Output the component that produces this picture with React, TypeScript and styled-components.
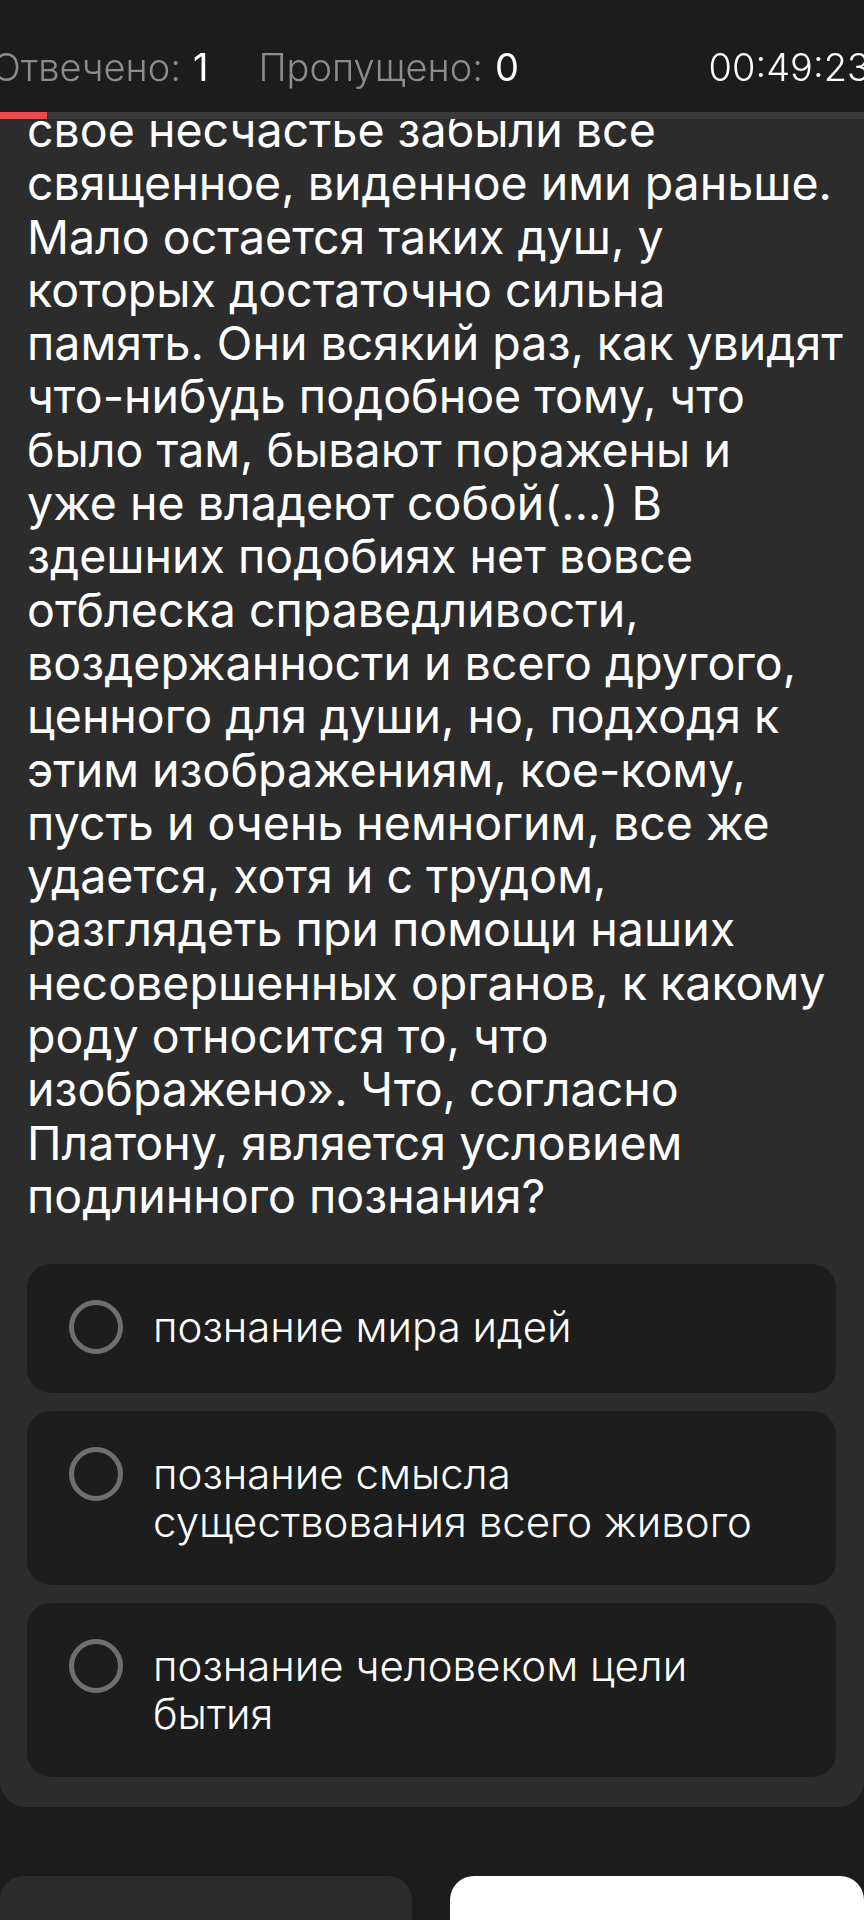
import React from 'react';
import styled, { createGlobalStyle } from 'styled-components';

const GlobalStyle = createGlobalStyle`
  html, body {
    margin: 0;
    padding: 0;
    background: #1c1c1c;
  }
  body {
    font-family: Inter, "Noto Sans", "DejaVu Sans", sans-serif;
    color: #ffffff;
  }
`;

const questionLines = [
  'свое несчастье забыли все',
  'священное, виденное ими раньше.',
  'Мало остается таких душ, у',
  'которых достаточно сильна',
  'память. Они всякий раз, как увидят',
  'что-нибудь подобное тому, что',
  'было там, бывают поражены и',
  'уже не владеют собой(…) В',
  'здешних подобиях нет вовсе',
  'отблеска справедливости,',
  'воздержанности и всего другого,',
  'ценного для души, но, подходя к',
  'этим изображениям, кое-кому,',
  'пусть и очень немногим, все же',
  'удается, хотя и с трудом,',
  'разглядеть при помощи наших',
  'несовершенных органов, к какому',
  'роду относится то, что',
  'изображено». Что, согласно',
  'Платону, является условием',
  'подлинного познания?',
];

const answers = [
  ['познание мира идей'],
  ['познание смысла', 'существования всего живого'],
  ['познание человеком цели', 'бытия'],
];

const Screen = styled.div`
  width: 864px;
  height: 1920px;
  overflow: hidden;
  background: #1c1c1c;
`;

const TopBar = styled.header`
  position: fixed;
  top: 0;
  left: 0;
  width: 864px;
  z-index: 5;
  background: #1c1c1c;
`;

const StatsRow = styled.div`
  height: 112px;
  box-sizing: border-box;
  padding-top: 44px;
  display: flex;
  align-items: flex-start;
  justify-content: space-between;
  font-size: 38px;
  line-height: 46px;
  white-space: nowrap;
`;

const StatGroup = styled.div`
  display: flex;
  gap: 50px;
  margin-left: -8px;
`;

const Stat = styled.div`
  display: flex;
  gap: 12px;
`;

const StatLabel = styled.span`
  color: #8c8c8c;
  font-weight: 300;
`;

const StatValue = styled.span`
  color: #ffffff;
  font-weight: 400;
`;

const Timer = styled.span`
  color: #ffffff;
  font-weight: 300;
  margin-right: -6px;
`;

const Track = styled.div`
  height: 7px;
  background: #3a3a3a;
`;

const Fill = styled.div`
  height: 100%;
  background: #ec4a4f;
`;

const Card = styled.main`
  background: #2c2c2c;
  border-radius: 0 0 26px 26px;
  padding: 104px 28px 30px 27px;
`;

const Question = styled.div`
  font-size: 46.5px;
  line-height: 53.3px;
  font-weight: 400;
  color: #ffffff;
  margin-bottom: 41px;
`;

const Line = styled.span`
  display: block;
  white-space: nowrap;
`;

const Options = styled.div`
  display: flex;
  flex-direction: column;
  gap: 18px;
`;

const Option = styled.label`
  display: flex;
  align-items: flex-start;
  gap: 30px;
  background: #1d1d1d;
  border-radius: 24px;
  padding: 39px 30px 39px 42px;
`;

const Radio = styled.span`
  flex: none;
  width: 44px;
  height: 44px;
  border: 5px solid #6f6f6f;
  border-radius: 50%;
  margin-top: -3px;
`;

const OptionText = styled.span`
  font-size: 42px;
  line-height: 48px;
  font-weight: 300;
  color: #ffffff;
`;

const Footer = styled.div`
  display: grid;
  grid-template-columns: 412px 414px;
  column-gap: 38px;
  margin-top: 69px;
`;

const FooterButton = styled.button<{ $primary?: boolean }>`
  height: 110px;
  border: none;
  border-radius: 24px 24px 0 0;
  background: ${p => (p.$primary ? '#ffffff' : '#2c2c2c')};
`;

const App: React.FC = () => {
  const progress = 47;
  return (
    <Screen>
      <GlobalStyle />
      <TopBar>
        <StatsRow>
          <StatGroup>
            <Stat>
              <StatLabel>Отвечено:</StatLabel>
              <StatValue>1</StatValue>
            </Stat>
            <Stat>
              <StatLabel>Пропущено:</StatLabel>
              <StatValue>0</StatValue>
            </Stat>
          </StatGroup>
          <Timer>00:49:23</Timer>
        </StatsRow>
        <Track>
          <Fill style={{ width: `${progress}px` }} />
        </Track>
      </TopBar>
      <Card>
        <Question>
          {questionLines.map((l, i) => (
            <Line key={i}>{l}</Line>
          ))}
        </Question>
        <Options>
          {answers.map((a, i) => (
            <Option key={i}>
              <Radio />
              <OptionText>
                {a.map((l, j) => (
                  <Line key={j}>{l}</Line>
                ))}
              </OptionText>
            </Option>
          ))}
        </Options>
      </Card>
      <Footer>
        <FooterButton />
        <FooterButton $primary />
      </Footer>
    </Screen>
  );
};

export default App;
